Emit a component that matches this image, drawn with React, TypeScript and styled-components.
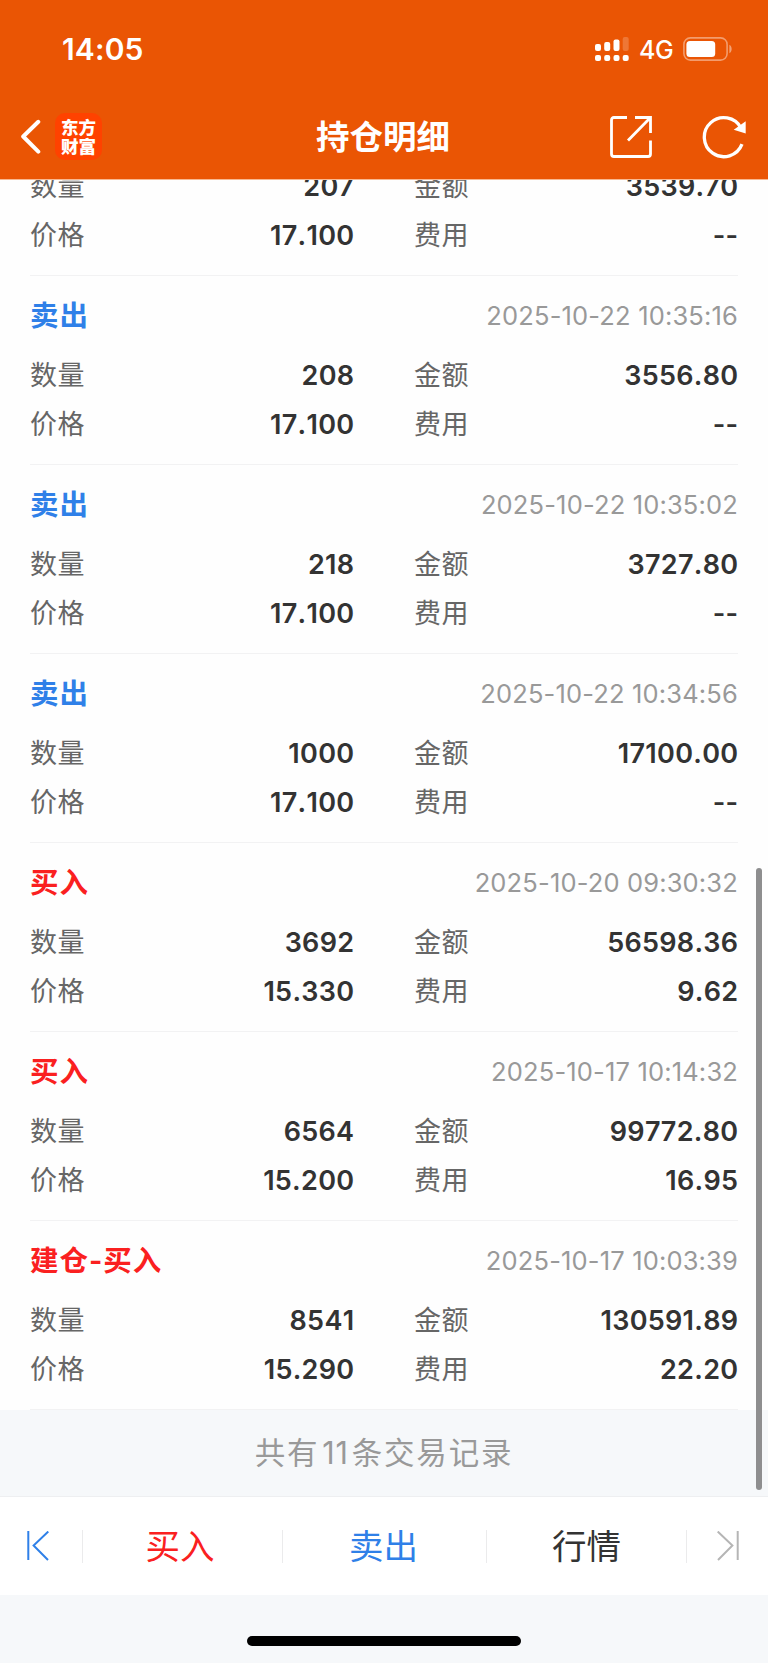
import React from 'react';
import styled, { createGlobalStyle } from 'styled-components';

const BLUE = '#2f80e8';
const RED = '#fa2020';

const GlobalStyle = createGlobalStyle`
  * { box-sizing: border-box; }
  body {
    margin: 0;
    background: #f6f8fa;
    font-family: Inter, "Noto Sans CJK SC", sans-serif;
  }
`;

const Screen = styled.div`
  position: relative;
  display: flex;
  flex-direction: column;
  width: 768px;
  height: 1663px;
  overflow: hidden;
`;

const Header = styled.header`
  height: 180px;
  flex: none;
  background: #ea5504;
  border-bottom: 1px solid #f8b891;
  color: #fff;
`;

const StatusBar = styled.div`
  display: flex;
  align-items: center;
  height: 98px;
  padding: 0 35px 0 62px;
`;

const Clock = styled.div`
  flex: 1;
  font-size: 30px;
  font-weight: 600;
  letter-spacing: 0.15px;
  line-height: 40px;
`;

const Network = styled.div`
  flex: none;
  width: 54px;
  padding: 2px 0 0 10px;
  font-size: 25px;
  font-weight: 500;
  letter-spacing: -0.5px;
  line-height: 30px;
`;

const NavBar = styled.div`
  display: grid;
  grid-template-columns: 1fr auto 1fr;
  align-items: center;
  height: 77px;
  padding: 0 19px 0 20px;
`;

const NavSide = styled.div<{ $end?: boolean }>`
  display: flex;
  align-items: center;
  justify-content: ${(p) => (p.$end ? 'flex-end' : 'flex-start')};
  gap: ${(p) => (p.$end ? '47px' : '13px')};
`;

const Title = styled.h1`
  margin: 0;
  padding-right: 3px;
  font-size: 33.5px;
  font-weight: 700;
  line-height: 48px;
`;

const Logo = styled.div`
  width: 47px;
  height: 47px;
  padding-top: 4px;
  border-radius: 10px;
  background: #ff4200;
  font-family: "Noto Sans CJK SC", sans-serif;
  font-size: 17.5px;
  font-weight: 900;
  line-height: 19px;
  text-align: center;
`;

const List = styled.main`
  display: flex;
  flex-direction: column;
  justify-content: flex-end;
  flex: none;
  height: 1230px;
  padding: 0 30px;
  overflow: hidden;
  background: #fefefe;
`;

const Record = styled.section`
  flex: none;
  padding: 17px 0 15px;
  border-bottom: 1px solid #f2f2f3;
`;

const RecordHead = styled.div`
  display: flex;
  justify-content: space-between;
  align-items: center;
  height: 46px;
  margin-bottom: 12px;
`;

const Side = styled.div<{ $color: string }>`
  color: ${(p) => p.$color};
  font-size: 28.5px;
  font-weight: 700;
  letter-spacing: 1px;
  line-height: 46px;
`;

const Time = styled.time`
  color: #999;
  font-size: 25.5px;
  letter-spacing: 0.16px;
  line-height: 46px;
`;

const Fields = styled.div`
  display: grid;
  grid-template-columns: 1fr 1fr;
  column-gap: 60px;
`;

const Field = styled.div`
  display: flex;
  justify-content: space-between;
  align-items: center;
  height: 49px;
`;

const Label = styled.span`
  color: #666;
  font-size: 27px;
  letter-spacing: 0.4px;
  line-height: 49px;
`;

const Value = styled.span`
  margin-right: -0.4px;
  color: #333;
  font-size: 27px;
  font-weight: 600;
  font-kerning: none;
  letter-spacing: 0.3px;
  line-height: 49px;
`;

const Summary = styled.div`
  height: 87px;
  flex: none;
  border-bottom: 1px solid #eeeff1;
  color: #999;
  font-size: 30.5px;
  letter-spacing: 1.8px;
  line-height: 86px;
  text-align: center;
`;

const Count = styled.span`
  margin: 0 3px 0 3px;
  letter-spacing: 0.8px;
`;

const TabBar = styled.nav`
  display: grid;
  grid-template-columns: 83px 200px 204px 200px 81px;
  align-items: center;
  height: 98px;
  flex: none;
  background: #fff;
`;

const Tab = styled.div<{ $color?: string; $shift?: number; $last?: boolean }>`
  display: flex;
  align-items: center;
  justify-content: center;
  height: 33px;
  padding-right: ${(p) => p.$shift ?? 0}px;
  border-right: ${(p) => (p.$last ? 'none' : '1px solid #ebebec')};
  color: ${(p) => p.$color ?? '#333'};
  font-size: 34.5px;
  line-height: 33px;
`;

const HomeArea = styled.div`
  display: flex;
  justify-content: center;
  padding-top: 41px;
`;

const HomeIndicator = styled.div`
  width: 274px;
  height: 10px;
  border-radius: 5px;
  background: #000;
`;

const ScrollThumb = styled.div`
  position: absolute;
  top: 868px;
  right: 6px;
  width: 6px;
  height: 622px;
  border-radius: 3px;
  background: #8e8e8f;
`;

const SignalIcon = () => (
  <svg width="34" height="26" viewBox="0 0 34 26" fill="#fff">
    <rect x="0" y="8" width="6" height="7" rx="2" />
    <rect x="9.2" y="6" width="6" height="9" rx="2" />
    <rect x="18.5" y="3.5" width="6" height="11.5" rx="2" />
    <rect x="27.7" y="1" width="6" height="14" rx="2" opacity="0.2" />
    <rect x="0" y="19" width="6" height="6" rx="2" />
    <rect x="9.2" y="19" width="6" height="6" rx="2" />
    <rect x="18.5" y="19" width="6" height="6" rx="2" />
    <rect x="27.7" y="19" width="6" height="6" rx="2" />
  </svg>
);

const BatteryIcon = () => (
  <svg width="50" height="24" viewBox="0 0 50 24" fill="none">
    <rect x="0.9" y="0.9" width="43.2" height="22.2" rx="6.5" stroke="#fff" strokeOpacity="0.42" strokeWidth="1.6" />
    <rect x="3.4" y="4" width="28.8" height="16" rx="3.5" fill="#fff" />
    <path d="M46.4 7.8c3 1.6 3 6.8 0 8.4z" fill="#fff" fillOpacity="0.45" />
  </svg>
);

const BackIcon = () => (
  <svg width="22" height="36" viewBox="0 0 22 36" fill="none" stroke="#fff" strokeWidth="4" strokeLinecap="round" strokeLinejoin="round">
    <path d="M18.3 2.8 3.2 17.5l15.1 15.2" />
  </svg>
);

const ShareIcon = () => (
  <svg width="42" height="42" viewBox="0 0 42 42" fill="none" stroke="#fff" strokeWidth="2.8">
    <path d="M17 1.5H4Q1.5 1.5 1.5 4V38Q1.5 40.5 4 40.5H38Q40.5 40.5 40.5 38V24.5" />
    <path d="M25 1.5H40.5V17M40 2 18 24.5" />
  </svg>
);

const RefreshIcon = () => (
  <svg width="50" height="44" viewBox="0 0 50 44" fill="none">
    <path d="M43 29.2A19.5 19.5 0 1 1 42 13" stroke="#fff" strokeWidth="3.3" />
    <path d="M46.7 6.2V18.6L34.7 14.7z" fill="#fff" />
  </svg>
);

const FirstIcon = () => (
  <svg width="22" height="30" viewBox="0 0 22 30" fill="none" stroke={BLUE} strokeWidth="2">
    <path d="M1.3 0v29M21.3.5 6.6 14.5 21 29" />
  </svg>
);

const LastIcon = () => (
  <svg width="22" height="30" viewBox="0 0 22 30" fill="none" stroke="#b5b5b5" strokeWidth="2">
    <path d="M20.7 0v29M.7.5 15.4 14.5 1 29" />
  </svg>
);

interface Trade {
  side?: string;
  time?: string;
  quantity: string;
  amount: string;
  price: string;
  fee: string;
}

const trades: Trade[] = [
  { quantity: '207', amount: '3539.70', price: '17.100', fee: '--' },
  { side: '卖出', time: '2025-10-22 10:35:16', quantity: '208', amount: '3556.80', price: '17.100', fee: '--' },
  { side: '卖出', time: '2025-10-22 10:35:02', quantity: '218', amount: '3727.80', price: '17.100', fee: '--' },
  { side: '卖出', time: '2025-10-22 10:34:56', quantity: '1000', amount: '17100.00', price: '17.100', fee: '--' },
  { side: '买入', time: '2025-10-20 09:30:32', quantity: '3692', amount: '56598.36', price: '15.330', fee: '9.62' },
  { side: '买入', time: '2025-10-17 10:14:32', quantity: '6564', amount: '99772.80', price: '15.200', fee: '16.95' },
  { side: '建仓-买入', time: '2025-10-17 10:03:39', quantity: '8541', amount: '130591.89', price: '15.290', fee: '22.20' },
];

const TradeRecord = ({ trade }: { trade: Trade }) => (
  <Record>
    {trade.side && (
      <RecordHead>
        <Side $color={trade.side.includes('买入') ? RED : BLUE}>{trade.side}</Side>
        <Time>{trade.time}</Time>
      </RecordHead>
    )}
    <Fields>
      <Field><Label>数量</Label><Value>{trade.quantity}</Value></Field>
      <Field><Label>金额</Label><Value>{trade.amount}</Value></Field>
      <Field><Label>价格</Label><Value>{trade.price}</Value></Field>
      <Field><Label>费用</Label><Value>{trade.fee}</Value></Field>
    </Fields>
  </Record>
);

export default function App() {
  return (
    <Screen>
      <GlobalStyle />
      <Header>
        <StatusBar>
          <Clock>14:05</Clock>
          <SignalIcon />
          <Network>4G</Network>
          <BatteryIcon />
        </StatusBar>
        <NavBar>
          <NavSide>
            <BackIcon />
            <Logo>东方<br />财富</Logo>
          </NavSide>
          <Title>持仓明细</Title>
          <NavSide $end>
            <ShareIcon />
            <RefreshIcon />
          </NavSide>
        </NavBar>
      </Header>
      <List>
        {trades.map((trade, i) => <TradeRecord key={i} trade={trade} />)}
      </List>
      <Summary>共有<Count>11</Count>条交易记录</Summary>
      <TabBar>
        <Tab $shift={6}><FirstIcon /></Tab>
        <Tab $color={RED} $shift={5}>买入</Tab>
        <Tab $color={BLUE} $shift={2}>卖出</Tab>
        <Tab>行情</Tab>
        <Tab $last><LastIcon /></Tab>
      </TabBar>
      <HomeArea><HomeIndicator /></HomeArea>
      <ScrollThumb />
    </Screen>
  );
}
